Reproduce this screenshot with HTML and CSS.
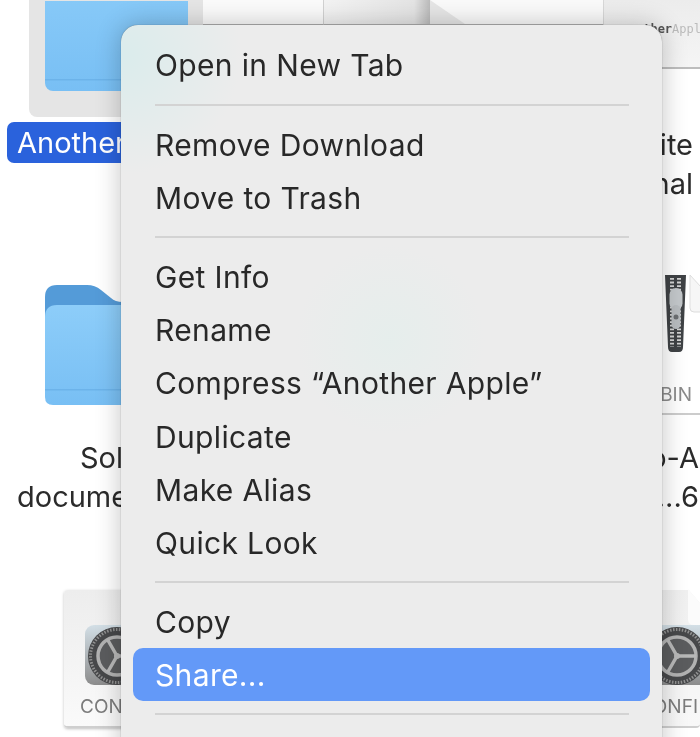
FILE: index.html
```html
<!DOCTYPE html>
<html lang="en">
<head>
    <meta charset="UTF-8">
    <meta name="viewport" content="width=device-width, initial-scale=1.0">
    <title>Finder context menu</title>
    <link rel="stylesheet" href="styles.css">
</head>
<body>
    <div id="desktop">
        <!-- files behind the menu -->
        <div class="tile"></div>
        <svg class="folder folder-top" viewBox="0 0 143 90" aria-hidden="true">
            <defs>
                <linearGradient id="front" x1="0" y1="0" x2="0" y2="1">
                    <stop offset="0" stop-color="#8dcdf9"/>
                    <stop offset="1" stop-color="#78bff4"/>
                </linearGradient>
            </defs>
            <rect y="-40" width="143" height="130" rx="8" fill="url(#front)"/>
            <rect y="78" width="143" height="1.500" fill="#6cb3ea"/>
        </svg>
        <div class="sel-label">Another</div>

        <div class="thumb thumb-a"></div>
        <div class="thumb thumb-b"></div>
        <div class="thumb thumb-c"></div>
        <svg class="fold-top" viewBox="0 0 36 25" aria-hidden="true"><path d="M0 0L35 24H0Z" fill="#e6e6e6"/></svg>
        <div class="thumb-right"><span class="dark">ther</span><span class="light">Appl</span></div>

        <div class="name name-r1">ite<br>nal</div>

        <svg class="folder folder-mid" viewBox="0 0 240 120" aria-hidden="true">
            <path d="M0 12Q0 0 12 0H42Q50 0 56 5L66 13Q70 17 78 17H240V60H0Z" fill="#549bd8"/>
            <path d="M0 32Q0 20 12 20H240V120H8Q0 120 0 112Z" fill="url(#front)"/>
            <rect y="104" width="240" height="1.500" fill="#6cb3ea"/>
        </svg>
        <div class="name name-sol">Sol</div>
        <div class="name name-doc">docume</div>

        <svg class="zip" viewBox="0 0 22 78" aria-hidden="true">
            <path d="M0 0H21L18 72Q18 77 14 77H7Q3 77 3 72Z" fill="#3f4245"/>
            <path d="M10.500 3V72" stroke="#d4d4d4" stroke-width="11" stroke-dasharray="1.800 1.800"/>
            <rect x="9" y="3" width="3" height="70" fill="#3f4245"/>
            <rect x="4.500" y="13" width="13" height="22" rx="6.500" fill="#c3c7ca"/>
            <rect x="6.500" y="30" width="9" height="24" rx="4.500" fill="#b8bcbf"/>
            <circle cx="11" cy="42" r="2.500" fill="#6b6e71"/>
        </svg>
        <svg class="page-r" viewBox="0 0 12 40" aria-hidden="true"><path d="M12 37H5Q1 37 1 33V0L12 12Z" fill="#f6f6f6" stroke="#ddd"/></svg>
        <div class="bin">BIN</div>
        <div class="bin-line"></div>
        <div class="name name-r2">o-A<br>...6</div>

        <div class="card card-l"></div>
        <div class="gear-tile tile-l"></div>
        <svg class="gear gear-l" viewBox="-32 -32 64 64" aria-hidden="true">
            <circle r="29" fill="#47484a"/>
            <circle r="26.500" fill="none" stroke="#929292" stroke-width="3" stroke-dasharray="1.500 1.500"/>
            <circle r="19" fill="#5b5c5e" stroke="#b2b2b2" stroke-width="3.500"/>
            <path d="M0 0L19 0M0 0L-9.500 -16.500M0 0L-9.500 16.500" stroke="#b8b8b8" stroke-width="3.500"/>
            <circle r="3" fill="#b8b8b8"/>
        </svg>
        <div class="file-name file-l">CON</div>

        <div class="card card-r"></div>
        <svg class="fold-r" viewBox="0 0 14 36" aria-hidden="true">
            <path d="M2 0H14V14Z" fill="#fff"/>
            <path d="M2 0L14 14V36H8Q2 36 2 30Z" fill="#fbfbfb"/>
        </svg>
        <div class="gear-tile tile-r"></div>
        <svg class="gear gear-r" viewBox="-32 -32 64 64" aria-hidden="true">
            <circle r="29" fill="#47484a"/>
            <circle r="26.500" fill="none" stroke="#929292" stroke-width="3" stroke-dasharray="1.500 1.500"/>
            <circle r="19" fill="#5b5c5e" stroke="#b2b2b2" stroke-width="3.500"/>
            <path d="M0 0L19 0M0 0L-9.500 -16.500M0 0L-9.500 16.500" stroke="#b8b8b8" stroke-width="3.500"/>
            <circle r="3" fill="#b8b8b8"/>
        </svg>
        <div class="file-name file-r">ONFI</div>

        <div id="menu">
            <div class="item">Open in New Tab</div>
            <div class="sep"></div>
            <div class="item">Remove Download</div>
            <div class="item">Move to Trash</div>
            <div class="sep"></div>
            <div class="item">Get Info</div>
            <div class="item">Rename</div>
            <div class="item">Compress “Another Apple”</div>
            <div class="item">Duplicate</div>
            <div class="item">Make Alias</div>
            <div class="item">Quick Look</div>
            <div class="sep"></div>
            <div class="item">Copy</div>
            <div class="item active">Share...</div>
            <div class="sep"></div>
        </div>
    </div>
</body>
</html>
```

FILE: styles.css
```css
body, html {
    margin: 0;
    padding: 0;
    height: 100%;
    background-color: #fff;
    font-family: Inter, "Liberation Sans", sans-serif;
}
#desktop {
    width: 700px;
    height: 737px;
    position: relative;
    overflow: hidden;
    background-color: #fff;
    filter: blur(0.4px);
}

/* top row */
.tile {
    position: absolute;
    left: 29px;
    top: -20px;
    width: 174px;
    height: 137px;
    background-color: #e5e5e5;
    border-radius: 8px;
}
.folder {
    position: absolute;
    display: block;
    left: 45px;
}
.folder-top {
    top: 1px;
    width: 143px;
    height: 90px;
}
.folder-mid {
    top: 285px;
    width: 240px;
    height: 120px;
}
.sel-label {
    position: absolute;
    left: 7px;
    top: 122px;
    width: 230px;
    height: 41px;
    box-sizing: border-box;
    padding-left: 10px;
    line-height: 41px;
    font-size: 29px;
    color: #fff;
    background-color: #2a62dc;
    border-radius: 7px;
    white-space: nowrap;
}
.thumb {
    position: absolute;
    top: 0;
    height: 24px;
    border-bottom: 1px solid #b5b5b5;
}
.thumb-a {
    left: 203px;
    width: 120px;
    background-color: #fbfbfb;
}
.thumb-b {
    left: 323px;
    width: 106px;
    background: linear-gradient(to right, #f3f3f3, #e4e4e4 85%, #bbb);
    border-left: 1px solid #d2d2d2;
}
.thumb-c {
    left: 430px;
    width: 270px;
    background-color: #fafafa;
}
.fold-top {
    position: absolute;
    left: 430px;
    top: 0;
    width: 36px;
    height: 25px;
}
.thumb-right {
    position: absolute;
    left: 603px;
    top: 0;
    width: 97px;
    height: 67px;
    background: linear-gradient(#ececec, #f5f5f5);
    border-left: 1px solid #d8d8d8;
    border-bottom: 2px solid #bdbdbd;
    font-family: "DejaVu Sans Mono", monospace;
    font-size: 12px;
    line-height: 58px;
    text-align: right;
    white-space: nowrap;
    overflow: hidden;
}
.dark { color: #555; font-weight: bold; }
.light { color: #bbb; }

/* filenames */
.name {
    position: absolute;
    font-size: 29px;
    line-height: 39px;
    color: #2b2b2b;
    white-space: nowrap;
}
.name-r1 {
    right: 7px;
    top: 125px;
    text-align: right;
}
.name-sol {
    left: 80px;
    top: 438px;
}
.name-doc {
    left: 17px;
    top: 477px;
}
.name-r2 {
    right: 1px;
    top: 438px;
    text-align: right;
}

/* zip file */
.zip {
    position: absolute;
    left: 665px;
    top: 275px;
    width: 22px;
    height: 78px;
}
.page-r {
    position: absolute;
    left: 689px;
    top: 275px;
    width: 12px;
    height: 40px;
}
.bin {
    position: absolute;
    right: 8px;
    top: 381px;
    font-size: 19px;
    line-height: 28px;
    color: #8a8a8a;
}
.bin-line {
    position: absolute;
    left: 660px;
    right: 0;
    top: 413px;
    height: 2px;
    background-color: #ccc;
}

/* config files */
.card {
    position: absolute;
    top: 590px;
    height: 136px;
    background: linear-gradient(#ededed, #fafafa);
    border-bottom: 2px solid #cfcfcf;
}
.card-l {
    left: 64px;
    width: 120px;
    border-radius: 4px;
    box-shadow: 0 1px 3px rgba(0,0,0,0.25);
}
.card-r {
    left: 640px;
    width: 60px;
    border-radius: 4px;
    background: linear-gradient(#f0f0f0, #f8f8f8);
}
.fold-r {
    position: absolute;
    left: 686px;
    top: 589px;
    width: 14px;
    height: 36px;
}
.gear-tile {
    position: absolute;
    top: 625px;
    height: 60px;
    background: linear-gradient(#d3dfe6, #8c8c8c);
}
.tile-l {
    left: 85px;
    width: 70px;
    border-radius: 9px;
}
.tile-r {
    left: 640px;
    width: 60px;
}
.gear {
    position: absolute;
    width: 64px;
    height: 64px;
    top: 624px;
}
.gear-l { left: 85px; }
.gear-r { left: 645px; }
.file-name {
    position: absolute;
    top: 693px;
    font-size: 19px;
    line-height: 28px;
    color: #7c7c7c;
}
.file-l { left: 80px; }
.file-r { right: 2px; }

/* context menu */
#menu {
    position: absolute;
    left: 121px;
    top: 25px;
    width: 541px;
    height: 760px;
    box-sizing: border-box;
    padding: 13.4px 12px 0;
    border-radius: 17px;
    background:
        radial-gradient(circle at 269px 315px, rgba(222,240,236,0.45), rgba(222,240,236,0) 95px),
        radial-gradient(circle at 0 30px, rgba(214,236,236,0.8), rgba(214,236,236,0) 120px),
        #ececec;
    box-shadow: 0 0 26px rgba(0,0,0,0.24), 0 0 1px rgba(0,0,0,0.5);
}
.item {
    height: 53.2px;
    line-height: 55px;
    padding-left: 22px;
    border-radius: 10px;
    font-size: 30px;
    letter-spacing: 0.35px;
    color: #282828;
    white-space: nowrap;
}
.item.active {
    background-color: #6399f8;
    color: #fff;
}
.sep {
    height: 2px;
    margin: 12px 21px 12px 22px;
    background-color: #d3d3d3;
}
```
